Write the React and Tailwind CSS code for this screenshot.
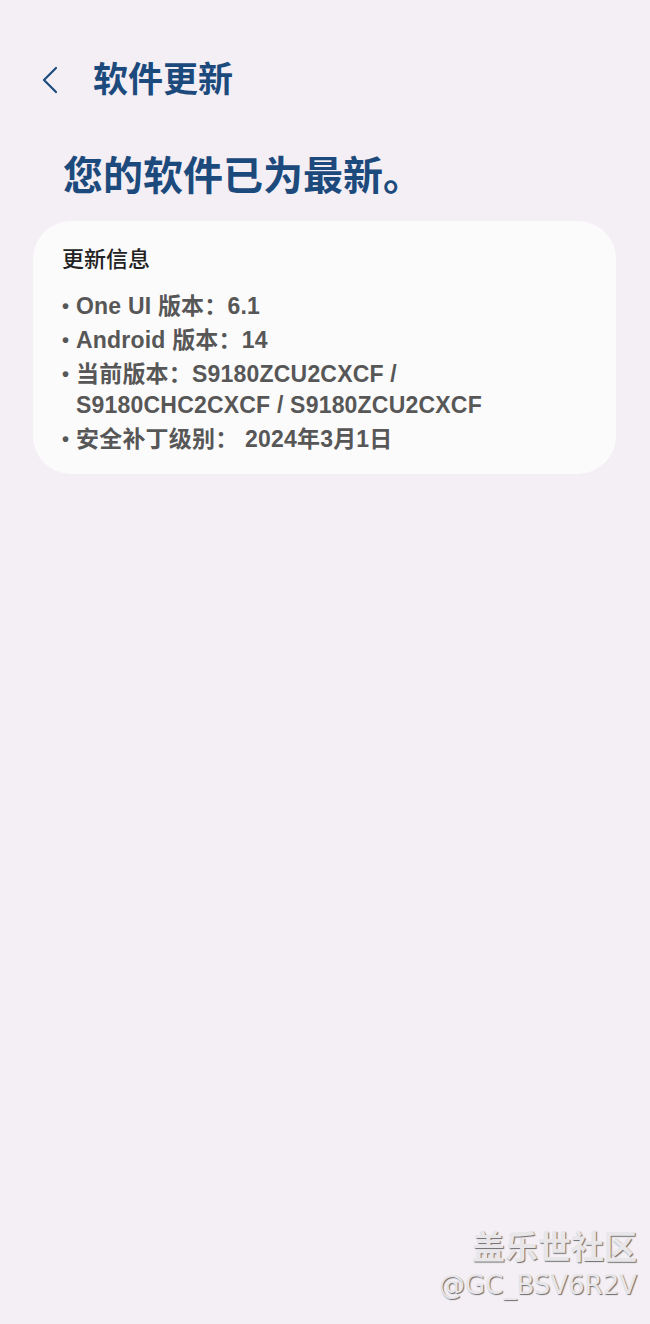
import React from 'react';

const font = { fontFamily: 'Roboto, "Noto Sans CJK SC", sans-serif' };
const listFont = { fontFamily: '"Liberation Sans", "Noto Sans CJK SC", sans-serif' };

function Chevron() {
  return (
    <svg width="18" height="28" viewBox="0 0 18 28" fill="none" className="shrink-0">
      <path d="M15 2 L3 14 L15 26" stroke="#1d4a7c" strokeWidth="2.2" strokeLinecap="round" strokeLinejoin="round" />
    </svg>
  );
}

const items = [
  ['One UI 版本：6.1'],
  ['Android 版本：14'],
  ['当前版本：S9180ZCU2CXCF /', 'S9180CHC2CXCF / S9180ZCU2CXCF'],
  ['安全补丁级别： 2024年3月1日'],
];

export default function App() {
  return (
    <div className="relative w-[650px] h-[1324px] bg-[#f3eff4] overflow-hidden" style={font}>
      {/* Top bar */}
      <div className="flex items-center pt-[60px] pl-[41px] h-[100px]">
        <Chevron />
        <h1 className="ml-[34px] text-[35px] leading-none font-bold text-[#1d4a7c]">软件更新</h1>
      </div>

      {/* Status */}
      <h2 className="pl-[63px] mt-[57px] text-[40px] leading-none font-bold text-[#1d4a7c]">您的软件已为最新。</h2>

      {/* Info card */}
      <div className="mx-[33px] mt-[24px] w-[583px] h-[253px] rounded-[38px] bg-[#fcfbfc] pl-[29px] pt-[26px]">
        <div className="text-[22px] leading-[26px] font-medium text-[#222]">更新信息</div>
        <div className="mt-[18px] flex flex-col gap-[3px] tracking-[0.2px]" style={listFont}>
          {items.map((lines, i) => (
            <div key={i} className="flex text-[23px] leading-[31px] font-bold text-[#575757]">
              <span className="w-[14px] shrink-0 text-[20px]">•</span>
              <div className="flex flex-col">
                {lines.map((l, j) => (
                  <span key={j}>{l}</span>
                ))}
              </div>
            </div>
          ))}
        </div>
      </div>

      {/* Watermark */}
      <div className="absolute right-[13px] bottom-[22px] flex flex-col items-end text-[#e8e6e9] [text-shadow:1px_1px_1px_#6b6b6b]">
        <span className="text-[33px] leading-[46px] font-bold" style={{ fontFamily: '"Noto Sans CJK SC", sans-serif' }}>盖乐世社区</span>
        <span className="text-[26px] leading-[34px]" style={{ fontFamily: '"DejaVu Sans", sans-serif' }}>@GC_BSV6R2V</span>
      </div>
    </div>
  );
}
